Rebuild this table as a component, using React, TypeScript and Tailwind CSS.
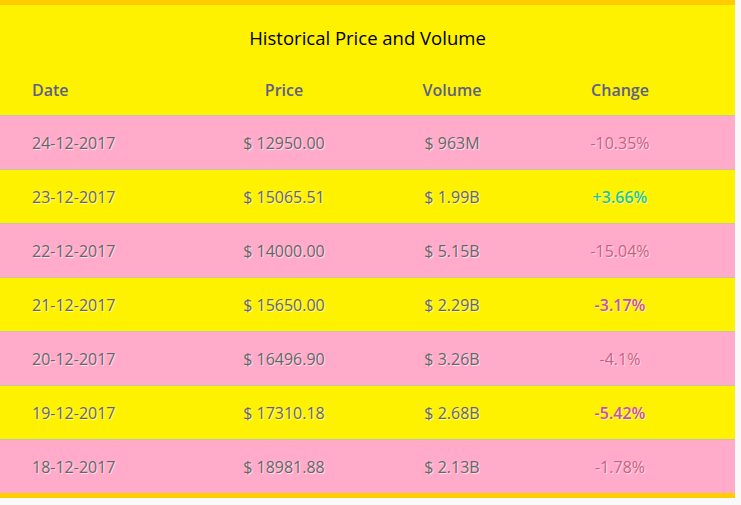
const rows = [
  { date: "24-12-2017", price: "$ 12950.00", volume: "$ 963M", change: "-10.35%" },
  { date: "23-12-2017", price: "$ 15065.51", volume: "$ 1.99B", change: "+3.66%" },
  { date: "22-12-2017", price: "$ 14000.00", volume: "$ 5.15B", change: "-15.04%" },
  { date: "21-12-2017", price: "$ 15650.00", volume: "$ 2.29B", change: "-3.17%" },
  { date: "20-12-2017", price: "$ 16496.90", volume: "$ 3.26B", change: "-4.1%" },
  { date: "19-12-2017", price: "$ 17310.18", volume: "$ 2.68B", change: "-5.42%" },
  { date: "18-12-2017", price: "$ 18981.88", volume: "$ 2.13B", change: "-1.78%" },
]

function changeClass(change: string, pink: boolean) {
  if (change.startsWith("+")) return "text-[#1fc77f] font-semibold"
  return pink ? "text-[#c9607e]" : "text-[#cc4fa0] font-semibold"
}

export default function App() {
  return (
    <div className="min-h-screen bg-[#f9f9f9] font-['Open_Sans',sans-serif]">
      <div className="w-[735px] border-t-[5px] border-b-[5px] border-[#ffcc00] bg-[#fff200]">
        <div className="h-[60px] flex items-center justify-center text-[18.5px] font-medium text-black pt-[6px]">
          Historical Price and Volume
        </div>
        <div className="grid grid-cols-[200px_168px_168px_168px_1fr] h-[50px] items-center text-[16px] font-semibold text-[#5b6088]">
          <div className="pl-[32px]">Date</div>
          <div className="text-center">Price</div>
          <div className="text-center">Volume</div>
          <div className="text-center">Change</div>
          <div />
        </div>
        {rows.map((r, i) => {
          const pink = i % 2 === 0
          return (
            <div
              key={r.date}
              className={
                "grid grid-cols-[200px_168px_168px_168px_1fr] h-[54px] items-center border-t border-[#c8c0b0] text-[16px] text-[#666] [text-shadow:1px_1px_1px_rgba(255,255,255,0.7)] " +
                (pink ? "bg-[#ffabc9]" : "bg-[#fff200]")
              }
            >
              <div className="pl-[32px]">{r.date}</div>
              <div className="text-center">{r.price}</div>
              <div className="text-center">{r.volume}</div>
              <div className={"text-center " + changeClass(r.change, pink)}>{r.change}</div>
              <div />
            </div>
          )
        })}
      </div>
    </div>
  )
}
